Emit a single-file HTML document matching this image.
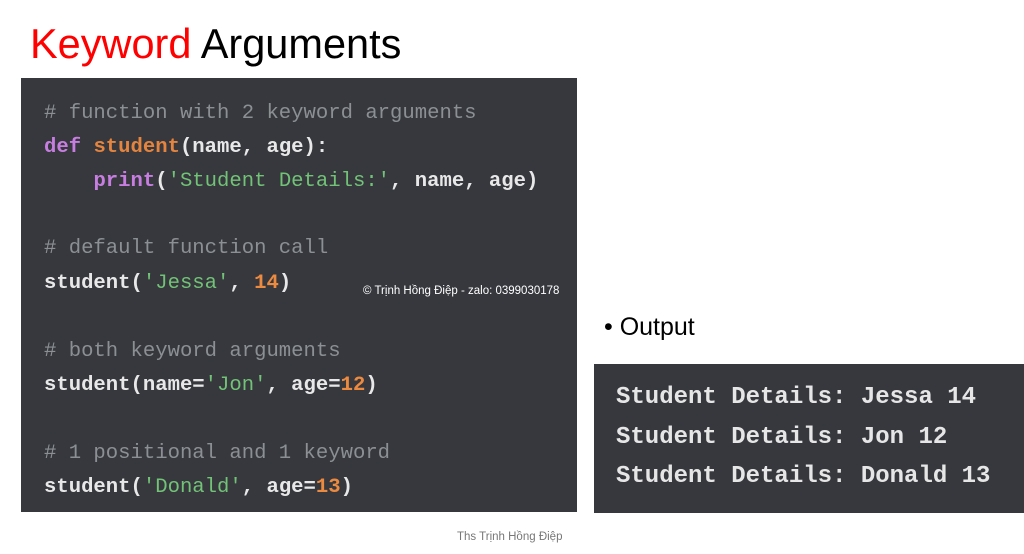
<!DOCTYPE html>
<html><head><meta charset="utf-8"><style>
body{margin:0;width:1024px;height:554px;background:#fff;position:relative;overflow:hidden;font-family:"Liberation Sans",sans-serif}
.t{position:absolute;left:30px;top:20px;font-size:41.5px;color:#000;white-space:nowrap}
.code{position:absolute;left:21px;top:78px;width:556px;height:434px;background:#36383d}
.l{position:absolute;left:23px;font-family:"Liberation Mono",monospace;font-size:20.6px;color:#e8e8e8;white-space:pre;font-weight:bold}
.c{color:#8c9095;font-weight:normal}.k{color:#c77ee0}.f{color:#e4843e}.s{color:#72c277;font-weight:normal}.n{color:#ec8a40}
.out{position:absolute;left:594px;top:364px;width:430px;height:149px;background:#36383d}
.o{position:absolute;left:22px;font-family:"Liberation Mono",monospace;font-size:24px;color:#e6e6e6;font-weight:bold;white-space:pre}
</style></head><body>
<div class="t"><span style="color:#f00">Keyword</span> Arguments</div>
<div class="code">
<div class="l" style="top:24px"><span class="c"># function with 2 keyword arguments</span></div>
<div class="l" style="top:58px"><span class="k">def</span> <span class="f">student</span>(name, age):</div>
<div class="l" style="top:92px">    <span class="k">print</span>(<span class="s">'Student Details:'</span>, name, age)</div>
<div class="l" style="top:159px"><span class="c"># default function call</span></div>
<div class="l" style="top:194px">student(<span class="s">'Jessa'</span>, <span class="n">14</span>)</div>
<div style="position:absolute;left:342px;top:207px;font-size:11.5px;color:#fff;white-space:nowrap">© Trịnh Hồng Điệp - zalo: 0399030178</div>
<div class="l" style="top:262px"><span class="c"># both keyword arguments</span></div>
<div class="l" style="top:296px">student(name=<span class="s">'Jon'</span>, age=<span class="n">12</span>)</div>
<div class="l" style="top:364px"><span class="c"># 1 positional and 1 keyword</span></div>
<div class="l" style="top:398px">student(<span class="s">'Donald'</span>, age=<span class="n">13</span>)</div>
</div>
<div style="position:absolute;left:604px;top:313px;font-size:25px;white-space:nowrap">• Output</div>
<div class="out">
<div class="o" style="top:20px">Student Details: Jessa 14</div>
<div class="o" style="top:60px">Student Details: Jon 12</div>
<div class="o" style="top:99px">Student Details: Donald 13</div>
</div>
<div style="position:absolute;left:457px;top:531px;font-size:11.5px;color:#777;white-space:nowrap">Ths Trịnh Hồng Điệp</div>
</body></html>
